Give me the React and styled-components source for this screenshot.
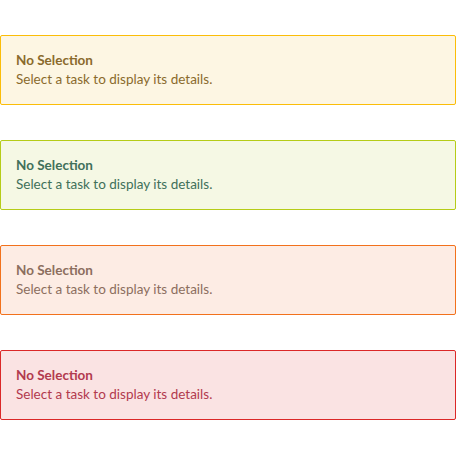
import React from "react";
import styled, { createGlobalStyle } from "styled-components";

const Global = createGlobalStyle`
  html, body { margin: 0; padding: 0; background: #fff; }
  body { font-family: Lato, "Open Sans", sans-serif; }
`;

const Page = styled.div`
  display: flex;
  flex-direction: column;
  gap: 35px;
  padding-top: 35px;
  width: 456px;
`;

const tones = {
  yellow: { bg: "#fdf6e3", border: "#fbbd08", color: "#8a6a2c" },
  olive: { bg: "#f5f8e4", border: "#b5cc18", color: "#41705a" },
  orange: { bg: "#fdece4", border: "#f2711c", color: "#8c6e5e" },
  red: { bg: "#fae3e3", border: "#db2828", color: "#b23a4e" },
};

const Message = styled.div`
  box-sizing: border-box;
  height: 70px;
  padding: 15px 15px;
  border: 1px solid ${(p) => tones[p.$tone].border};
  border-radius: 2px;
  background: ${(p) => tones[p.$tone].bg};
  color: ${(p) => tones[p.$tone].color};
  display: flex;
  flex-direction: column;
  justify-content: center;
`;

const Title = styled.div`
  font-size: 13.5px;
  font-weight: 700;
  line-height: 19px;
`;

const Body = styled.div`
  font-size: 13.5px;
  line-height: 19px;
`;

export default function App() {
  return (
    <>
      <Global />
      <Page>
        {["yellow", "olive", "orange", "red"].map((t) => (
          <Message key={t} $tone={t}>
            <Title>No Selection</Title>
            <Body>Select a task to display its details.</Body>
          </Message>
        ))}
      </Page>
    </>
  );
}
